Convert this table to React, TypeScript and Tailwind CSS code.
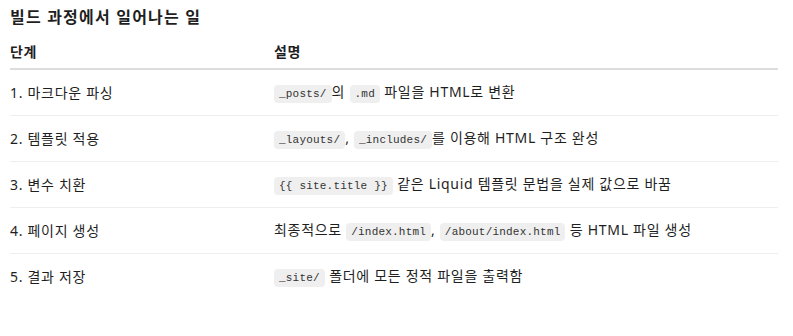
import React from 'react';

const Code: React.FC<{ children: React.ReactNode }> = ({ children }) => (
  <code className="rounded-[4px] bg-[#efefef] px-[5px] py-[3px] font-['Liberation_Mono',monospace] text-[11px] tracking-[0.2px] text-[#333]">
    {children}
  </code>
);

const rows: { step: string; desc: React.ReactNode }[] = [
  {
    step: '1. 마크다운 파싱',
    desc: (
      <>
        <Code>_posts/</Code>의 <Code>.md</Code> 파일을 HTML로 변환
      </>
    ),
  },
  {
    step: '2. 템플릿 적용',
    desc: (
      <>
        <Code>_layouts/</Code>, <Code>_includes/</Code>를 이용해 HTML 구조 완성
      </>
    ),
  },
  {
    step: '3. 변수 치환',
    desc: (
      <>
        <Code>{'{{ site.title }}'}</Code> 같은 Liquid 템플릿 문법을 실제 값으로 바꿈
      </>
    ),
  },
  {
    step: '4. 페이지 생성',
    desc: (
      <>
        최종적으로 <Code>/index.html</Code>, <Code>/about/index.html</Code> 등 HTML 파일 생성
      </>
    ),
  },
  {
    step: '5. 결과 저장',
    desc: (
      <>
        <Code>_site/</Code> 폴더에 모든 정적 파일을 출력함
      </>
    ),
  },
];

export default function App() {
  return (
    <div className="min-h-screen bg-white px-[10px] pt-[6px] font-['Noto_Sans','Noto_Sans_CJK_KR',sans-serif] text-[#1f1f1f]">
      <h3 className="text-[16px] font-bold leading-[22px] tracking-[1.2px]">빌드 과정에서 일어나는 일</h3>
      <div className="mt-[14px] w-[768px] text-[14px] tracking-[0.7px]">
        <div className="grid grid-cols-[264px_1fr] border-b-2 border-[#dcdcdc] pb-[6px] font-bold leading-[20px]">
          <div>단계</div>
          <div>설명</div>
        </div>
        {rows.map((r, i) => (
          <div
            key={i}
            className={`grid h-[46px] grid-cols-[264px_1fr] items-center leading-[20px] ${
              i < rows.length - 1 ? 'border-b border-[#eeeeee]' : ''
            }`}
          >
            <div>{r.step}</div>
            <div>{r.desc}</div>
          </div>
        ))}
      </div>
    </div>
  );
}
